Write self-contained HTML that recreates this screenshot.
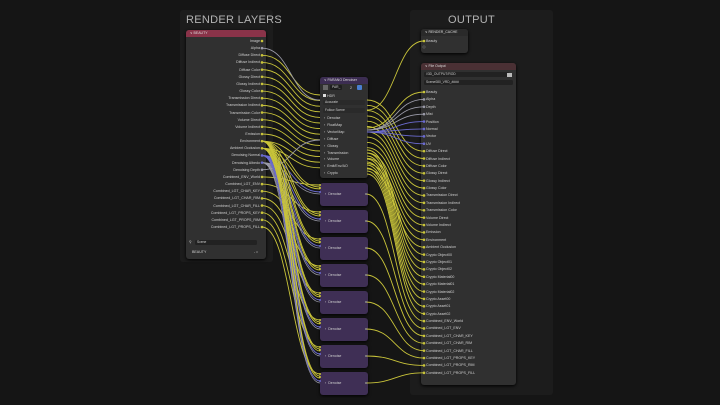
<!DOCTYPE html>
<html><head><meta charset="utf-8"><style>
*{margin:0;padding:0;box-sizing:border-box}
body{width:720px;height:405px;background:#151515;overflow:hidden;position:relative;font-family:"Liberation Sans",sans-serif;color:#ccc}
.abs{position:absolute}
.frame{position:absolute;background:#1c1c1c;border-radius:3px}
.title{position:absolute;font-size:11px;color:#b4b4b4;letter-spacing:0.3px}
.node{position:absolute;background:#303030;border-radius:3px;box-shadow:0 1px 3px #000}
.hdr{position:absolute;left:0;right:0;top:0;height:7px;border-radius:3px 3px 0 0;font-size:3.5px;line-height:7px;padding-left:4px;color:#ddd}
.lbl{position:absolute;font-size:3.6px;line-height:4px;color:#d0d0d0;white-space:nowrap}
.r{text-align:right}
.dn{position:absolute;background:#3f2f55;border-radius:3px;width:48px;height:23px;box-shadow:0 1px 3px #000}
.fld{position:absolute;background:#222;border-radius:1.5px;height:5px;font-size:3.3px;line-height:5px;padding-left:2px;color:#ccc}
svg{position:absolute;left:0;top:0}
</style></head><body>
<div class="frame" style="left:180px;top:10px;width:93px;height:252px"></div>
<div class="frame" style="left:410px;top:10px;width:143px;height:385px"></div>
<div class="title" style="left:186px;top:14px">RENDER LAYERS</div>
<div class="title" style="left:448px;top:14px">OUTPUT</div>

<div class="node" style="left:186px;top:30px;width:80px;height:229px"><div class="hdr" style="background:#8a3349">∨ BEAUTY</div></div>
<div class="node" style="left:320px;top:77px;width:48px;height:101px"><div class="hdr" style="background:#3c2d52">∨ PARANO Denoiser</div></div>
<div class="node" style="left:421px;top:29px;width:47px;height:24px"><div class="hdr" style="background:#2a2a2a">∨ RENDER_CACHE</div></div>
<div class="node" style="left:421px;top:63px;width:95px;height:322px"><div class="hdr" style="background:#4a3034">∨ File Output</div></div>
<div class="fld" style="left:424px;top:72px;width:85px">//3D_OUTPUT/ROD</div>
<div class="abs" style="left:507px;top:73px;width:5px;height:4px;background:#bbb"></div>
<div class="fld" style="left:424px;top:80px;width:89px">Scene080_VRD_####</div>
<div class="fld" style="left:195px;top:240px;width:62px">Scene</div>
<div class="lbl" style="left:189px;top:240px">⚲</div>
<div class="lbl" style="left:192px;top:250px">BEAUTY</div>
<div class="lbl" style="left:254px;top:250px">- ◐</div>
<div id="dns"></div>
<svg id="w" width="720" height="405"></svg>
<div id="labels"></div>
<script>
var rl=["Image","Alpha","Diffuse Direct","Diffuse Indirect","Diffuse Color","Glossy Direct","Glossy Indirect","Glossy Color","Transmission Direct","Transmission Indirect","Transmission Color","Volume Direct","Volume Indirect","Emission","Environment","Ambient Occlusion","Denoising Normal","Denoising Albedo","Denoising Depth","Combined_ENV_World","Combined_LGT_ENV","Combined_LGT_CHAR_KEY","Combined_LGT_CHAR_RIM","Combined_LGT_CHAR_FILL","Combined_LGT_PROPS_KEY","Combined_LGT_PROPS_RIM","Combined_LGT_PROPS_FILL"];
var fo=["Beauty","Alpha","Depth","Mist","Position","Normal","Vector","UV","Diffuse Direct","Diffuse Indirect","Diffuse Color","Glossy Direct","Glossy Indirect","Glossy Color","Transmission Direct","Transmission Indirect","Transmission Color","Volume Direct","Volume Indirect","Emission","Environment","Ambient Occlusion","Crypto Object00","Crypto Object01","Crypto Object02","Crypto Material00","Crypto Material01","Crypto Material02","Crypto Asset00","Crypto Asset01","Crypto Asset02","Combined_ENV_World","Combined_LGT_ENV","Combined_LGT_CHAR_KEY","Combined_LGT_CHAR_RIM","Combined_LGT_CHAR_FILL","Combined_LGT_PROPS_KEY","Combined_LGT_PROPS_RIM","Combined_LGT_PROPS_FILL"];
var dz=["Denoise","FloatMap","VectorMap","Diffuse","Glossy","Transmission","Volume","Emit/Env/AO","Crypto"];
var Y="#c9c43a",B="#6b6bd0",G="#9a9aa8";
var h="",s="",dots="";
function rlY(i){return 41+i*(186/26)}
function foY(i){return 92+i*7.39}
function col(n,i){if(n==="rl"){if(i==1||i==18)return G;if(i==16||i==17)return B;return Y}
 if(i>=1&&i<=3)return G;if(i>=4&&i<=7)return B;return Y}
rl.forEach(function(t,i){var y=rlY(i);h+='<div class="lbl r" style="left:190px;width:70px;top:'+(y-2)+'px">'+t+'</div>';dots+='<circle cx="262" cy="'+y+'" r="1.3" fill="'+col("rl",i)+'"/>';});
fo.forEach(function(t,i){var y=foY(i);h+='<div class="lbl" style="left:426px;top:'+(y-2)+'px">'+t+'</div>';dots+='<circle cx="424" cy="'+y+'" r="1.3" fill="'+col("fo",i)+'"/>';});
h+='<div class="lbl" style="left:426px;top:39px">Beauty</div>';dots+='<circle cx="424" cy="41" r="1.3" fill="'+Y+'"/><circle cx="424" cy="47" r="1.2" fill="none" stroke="#777" stroke-width=".5"/>';
dz.forEach(function(t,i){var y=118+i*6.9;h+='<div class="lbl" style="left:324px;top:'+(y-2)+'px">›&nbsp; '+t+'</div>';});
h+='<div class="abs" style="left:323px;top:85px;width:5px;height:5px;background:#666"></div><div class="fld" style="left:330px;top:85px;width:12px;background:#1e1e1e">PAR_</div><div class="lbl" style="left:350px;top:86px">2</div><div class="abs" style="left:357px;top:85px;width:5px;height:5px;background:#4a7fd0;border-radius:1px"></div>';
h+='<div class="abs" style="left:323px;top:94px;width:3px;height:3px;background:#ddd"></div><div class="lbl" style="left:327px;top:94px">HDR</div>';
h+='<div class="fld" style="left:323px;top:100px;width:42px;background:#2a2a2a">Accurate</div><div class="fld" style="left:323px;top:108px;width:42px;background:#2a2a2a">Follow Scene</div>';
var dy=[183,210,237,264,291,318,345,372],dh="";
dy.forEach(function(y){dh+='<div class="dn" style="left:320px;top:'+y+'px"></div>';h+='<div class="lbl" style="left:325px;top:'+(y+9)+'px">›&nbsp; Denoise</div>';});
document.getElementById("dns").innerHTML=dh;
function c(x1,y1,x2,y2,cl,w){var m=(x2-x1)*0.5;s+='<path d="M'+x1+' '+y1+' C'+(x1+m)+' '+y1+' '+(x2-m)+' '+y2+' '+x2+' '+y2+'" stroke="'+cl+'" stroke-width="'+(w||0.9)+'" fill="none"/>';}
// RL -> denoiser
for(var i=2;i<16;i++)c(262,rlY(i),320,95+(i-2)*5.6,Y);
c(262,rlY(1),320,100,G);c(262,rlY(18),320,140,G);
// RL combined -> denoise nodes
for(var k=0;k<8;k++){var y=dy[k];c(262,rlY(19+k),320,y+2,Y);c(262,rlY(14),320,y+4,Y);c(262,rlY(15),320,y+6,Y);c(262,rlY(16),320,y+9,B);c(262,rlY(17),320,y+11,G,0.7);}
// denoiser out -> FO
for(var i=8;i<22;i++)c(367,100+(i-8)*5.3,424,foY(i),Y);
for(var i=1;i<4;i++)c(367,130,424,foY(i),G);
for(var i=4;i<8;i++)c(367,132,424,foY(i),B);
c(367,128,424,foY(0),Y);c(367,110,424,41,Y);
for(var i=22;i<31;i++)c(367,150+(i-22)*3,424,foY(i),Y);
for(var k=0;k<8;k++)c(366,dy[k]+11,424,foY(31+k),Y);
for(var k=0;k<8;k++)s+='<circle cx="320" cy="'+(dy[k]+2)+'" r="1" fill="'+Y+'"/><circle cx="320" cy="'+(dy[k]+5)+'" r="1" fill="'+Y+'"/><circle cx="320" cy="'+(dy[k]+9)+'" r="1" fill="'+B+'"/><circle cx="366" cy="'+(dy[k]+11)+'" r="1" fill="#888"/>';
document.getElementById("w").innerHTML=s+dots;
document.getElementById("labels").innerHTML=h;
</script>
</body></html>
